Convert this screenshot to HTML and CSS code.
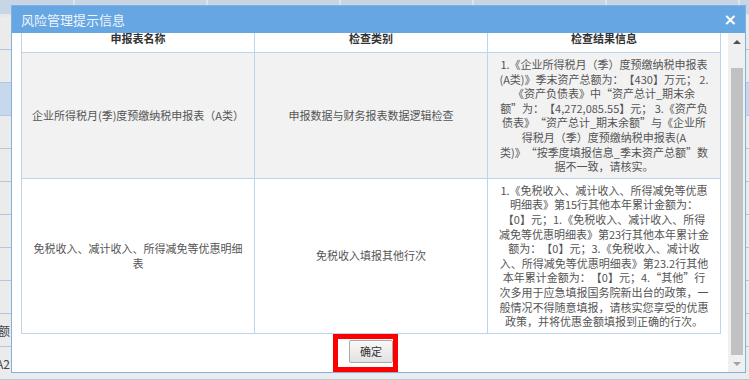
FILE: index.html
```html
<!DOCTYPE html>
<html>
<head>
    <title>风险管理提示信息</title>
    <link rel="stylesheet" href="styles.css">
</head>
<body>
    <div class="desk">
        <!-- 底层页面 -->
        <div class="bg-page">
            <div class="bg-head">
                <span class="bg-cell first"></span>
                <span class="bg-cell"></span>
                <span class="bg-cell"></span>
                <span class="bg-cell"></span>
                <span class="bg-cell"></span>
                <span class="bg-cell"></span>
            </div>
            <div class="bg-row"><span class="bg-lead"></span></div>
            <div class="bg-row"><span class="bg-lead"></span></div>
            <div class="bg-row active"><span class="bg-lead"></span></div>
            <div class="bg-row"><span class="bg-lead"></span></div>
            <div class="bg-row"><span class="bg-lead"></span></div>
            <div class="bg-row"><span class="bg-lead"></span></div>
            <div class="bg-row"><span class="bg-lead"></span></div>
            <div class="bg-row"><span class="bg-lead"></span></div>
            <div class="bg-row"><span class="bg-lead"></span></div>
            <div class="bg-row"><span class="bg-lead">期末金额</span></div>
            <div class="bg-row"><span class="bg-lead">A2</span></div>
        </div>

        <!-- 弹出窗口 -->
        <div class="dialog">
            <div class="dlg-title">
                <span>风险管理提示信息</span>
                <span class="dlg-close">×</span>
            </div>
            <div class="dlg-body">
                <div class="dlg-content">
                    <table class="risk-table">
                        <tr class="head">
                            <th>申报表名称</th>
                            <th>检查类别</th>
                            <th>检查结果信息</th>
                        </tr>
                        <tr class="odd">
                            <td>企业所得税月(季)度预缴纳税申报表（A类）</td>
                            <td>申报数据与财务报表数据逻辑检查</td>
                            <td class="result">1.《企业所得税月（季）度预缴纳税申报表(A类)》季末资产总额为：【430】万元； 2.《资产负债表》中“资产总计_期末余额”为：【4,272,085.55】元； 3.《资产负债表》“资产总计_期末余额”与《企业所得税月（季）度预缴纳税申报表(A类)》“按季度填报信息_季末资产总额”数据不一致，请核实。</td>
                        </tr>
                        <tr>
                            <td>免税收入、减计收入、所得减免等优惠明细表</td>
                            <td>免税收入填报其他行次</td>
                            <td class="result">1.《免税收入、减计收入、所得减免等优惠明细表》第15行其他本年累计金额为：【0】元；1.《免税收入、减计收入、所得减免等优惠明细表》第23行其他本年累计金额为：【0】元；3.《免税收入、减计收入、所得减免等优惠明细表》第23.2行其他本年累计金额为：【0】元；4.“其他”行次多用于应急填报国务院新出台的政策，一般情况不得随意填报，请核实您享受的优惠政策，并将优惠金额填报到正确的行次。</td>
                        </tr>
                    </table>
                    <div class="dlg-foot">
                        <span class="btn-wrap">
                            <button class="btn">确定</button>
                            <span class="mark"></span>
                        </span>
                    </div>
                </div>
                <div class="scrollbar">
                    <div class="sb-btn"><span class="arrow-up"></span></div>
                    <div class="sb-track"><div class="sb-thumb"></div></div>
                    <div class="sb-btn"><span class="arrow-down"></span></div>
                </div>
            </div>
        </div>
    </div>
</body>
</html>
```

FILE: styles.css
```css
* {
    box-sizing: border-box;
}

body {
    margin: 0;
    font-family: "Noto Sans CJK SC", "Microsoft YaHei", sans-serif;
    font-size: 11px;
    background: #e8e8e8;
    text-spacing-trim: space-all;
}

.desk {
    position: relative;
    width: 749px;
    height: 380px;
    overflow: hidden;
}

/* 底层页面 */
.bg-head {
    display: flex;
    height: 17px;
    background: #c7d5e4;
    border-bottom: 3px solid #e4e8ee;
}

.bg-cell {
    width: 133px;
    border-right: 2px solid #e0e4ea;
}

.bg-cell.first {
    width: 75px;
}

.bg-row {
    display: flex;
    height: 33px;
    background: #ebebeb;
    border-bottom: 1px solid #b3c6dc;
}

.bg-row.active {
    background: #c8d8ec;
}

.bg-lead {
    display: flex;
    align-items: center;
    justify-content: flex-end;
    width: 10px;
    white-space: nowrap;
    color: #444;
    font-size: 12px;
}

/* 弹出窗口 */
.dialog {
    position: absolute;
    left: 11px;
    top: 5px;
    width: 735px;
    height: 368px;
    display: flex;
    flex-direction: column;
    background: #fff;
    border: 1px solid #7fb1e3;
}

.dlg-title {
    display: flex;
    align-items: center;
    justify-content: space-between;
    height: 27px;
    padding: 0 8px 0 9px;
    background: #66a6e2;
    color: #eef5fc;
    font-size: 13px;
}

.dlg-close {
    font-size: 16px;
    font-weight: bold;
    color: #fff;
    font-family: "DejaVu Sans", sans-serif;
}

.dlg-body {
    flex: 1;
    display: flex;
    min-height: 0;
}

.dlg-content {
    flex: 1;
    overflow: hidden;
    padding-left: 9px;
}

.risk-table {
    width: 700px;
    margin-top: -9px;
    border-collapse: collapse;
    table-layout: fixed;
    color: #555;
}

.risk-table th,
.risk-table td {
    border: 1px solid #bcd5ef;
    text-align: center;
    vertical-align: middle;
    line-height: 14.6px;
    padding: 4px 7px;
    font-weight: normal;
}

.risk-table td.result {
    padding: 4px 10px;
}

.risk-table .head th {
    height: 28px;
    font-weight: bold;
    color: #333;
}

.risk-table .odd td {
    background: #f2f2f2;
}

.dlg-foot {
    display: flex;
    justify-content: center;
    width: 700px;
    padding-top: 6px;
}

.btn-wrap {
    position: relative;
    display: block;
    width: 44px;
    height: 23px;
}

.btn {
    display: block;
    width: 44px;
    height: 23px;
    padding: 0;
    font-family: inherit;
    font-size: 11px;
    color: #333;
    background: linear-gradient(#f8f8f8, #e2e2e2);
    border: 1px solid #a9a9a9;
    border-radius: 2px;
}

/* 红色标注框 */
.mark {
    position: absolute;
    left: -16px;
    top: -6px;
    width: 65px;
    height: 38px;
    border: 5px solid #ff0000;
}

.scrollbar {
    width: 17px;
    display: flex;
    flex-direction: column;
    background: #f0f0f0;
}

.sb-btn {
    height: 17px;
    display: flex;
    align-items: center;
    justify-content: center;
}

.arrow-up {
    border-left: 4px solid transparent;
    border-right: 4px solid transparent;
    border-bottom: 4px solid #505050;
}

.arrow-down {
    border-left: 4px solid transparent;
    border-right: 4px solid transparent;
    border-top: 4px solid #a3a3a3;
}

.sb-track {
    flex: 1;
    padding: 18px 2px 0 3px;
}

.sb-thumb {
    height: 287px;
    background: #c1c1c1;
}
```
